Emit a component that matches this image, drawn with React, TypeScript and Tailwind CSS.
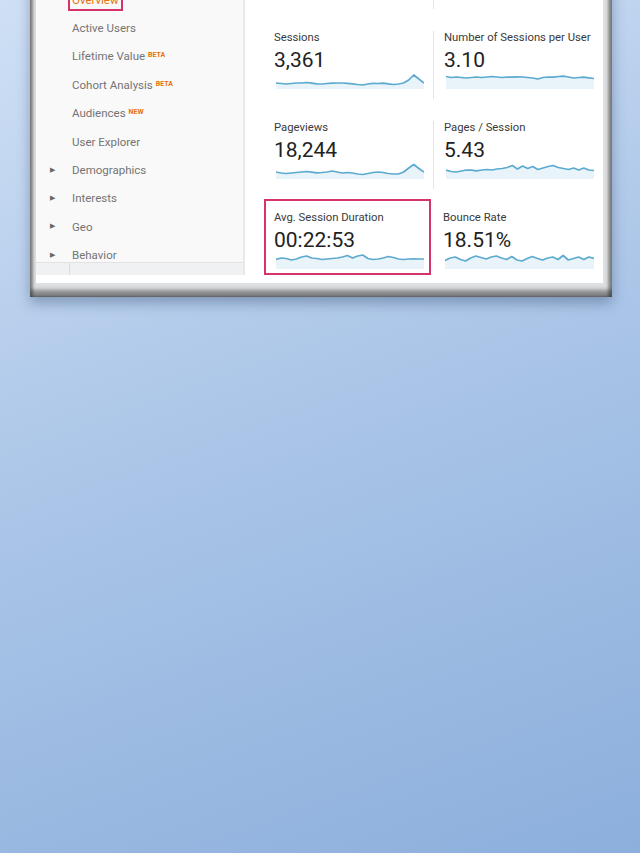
const NAV = [
  { label: "Overview", active: true },
  { label: "Active Users" },
  { label: "Lifetime Value", badge: "BETA" },
  { label: "Cohort Analysis", badge: "BETA" },
  { label: "Audiences", badge: "NEW" },
  { label: "User Explorer" },
  { label: "Demographics", arrow: true },
  { label: "Interests", arrow: true },
  { label: "Geo", arrow: true },
  { label: "Behavior", arrow: true },
];

type M = { label: string; value: string; pts: number[]; marked?: boolean };

const ROWS: M[][] = [
  [
    { label: "Sessions", value: "3,361", pts: [10, 10.5, 11, 10.5, 10, 10, 9.5, 10.2, 10.8, 11, 10.5, 10.2, 10, 10, 10.3, 10.8, 11.5, 12, 11, 10.3, 10.5, 10.2, 10.8, 11.5, 11, 10, 7, 2, 6, 10] },
    { label: "Number of Sessions per User", value: "3.10", pts: [3.5, 4.5, 4, 4.5, 5, 4.5, 4, 4.5, 4, 3.5, 4, 4.5, 4, 4.2, 3.8, 4, 4.5, 5, 6, 4.5, 4, 4.2, 3.5, 3.2, 4, 5, 4.5, 4.2, 4.8, 5.5] },
  ],
  [
    { label: "Pageviews", value: "18,244", pts: [9, 10, 10.5, 10, 9.5, 9, 8.5, 9.2, 9.8, 9.5, 9, 8, 9, 10, 9.5, 10, 11, 11.5, 10.5, 9.5, 9, 9.5, 10.5, 11, 11, 9, 5, 1.5, 5.5, 9] },
    { label: "Pages / Session", value: "5.43", pts: [7, 8.5, 9, 8, 7, 7.2, 7.8, 7, 6.5, 7, 6, 5.5, 4.5, 2.5, 6, 3, 5.5, 3.5, 6.5, 5, 3.5, 2.5, 4.5, 5.5, 6.5, 5, 7, 5, 7, 7.5] },
  ],
  [
    { label: "Avg. Session Duration", value: "00:22:53", pts: [6.5, 5, 5.5, 7, 6, 4, 3, 5, 5.5, 6.5, 6, 5.5, 5, 4, 2.5, 5, 3, 2, 5.5, 6.5, 6, 5, 3.5, 4.5, 6, 6.5, 6, 5.8, 6, 6], marked: true },
    { label: "Bounce Rate", value: "18.51%", pts: [7.5, 5, 4, 6.5, 8, 5, 3, 4.5, 6, 4, 3, 5, 6.5, 3.5, 7, 8, 5.5, 3.5, 5.5, 7, 5, 4, 6.5, 2.5, 7, 5.5, 4, 6.5, 4, 5.5] },
  ],
];

function Spark({ pts }: { pts: number[] }) {
  const step = 100 / (pts.length - 1);
  const line = pts.map((y, i) => `${i === 0 ? "M" : "L"}${(i * step).toFixed(2)},${y}`).join(" ");
  const area = `${line} L100,16 L0,16 Z`;
  return (
    <svg viewBox="0 0 100 16" preserveAspectRatio="none" className="block w-full h-[16px]">
      <path d={area} fill="#e8f3fa" />
      <path d={line} fill="none" stroke="#5caacf" strokeWidth="1.7" vectorEffect="non-scaling-stroke" strokeLinejoin="round" />
    </svg>
  );
}

function Metric({ m, divider }: { m: M; divider?: boolean }) {
  return (
    <div className={`relative pl-[10px] pr-[9px] pb-[10px] ${divider ? "border-l border-[#e4e4e4]" : ""}`}>
      <div className="text-[11.3px] leading-[13px] text-[#3a3a3a] whitespace-nowrap">{m.label}</div>
      <div className="mt-[4px] text-[21px] leading-[24px] text-[#222]">{m.value}</div>
      <div className="mt-[1px] pl-[2px]">
        <Spark pts={m.pts} />
      </div>
      {m.marked && (
        <div className="absolute left-0 top-[-12px] right-[2px] bottom-[4px] border-2 border-[#d6336c] pointer-events-none" />
      )}
    </div>
  );
}

export default function App() {
  return (
    <div className="min-h-[853px] overflow-hidden bg-[linear-gradient(160deg,#cfe0f5_0%,#a9c4e7_50%,#8cafdc_100%)] font-['Roboto','Liberation_Sans',sans-serif]">
      <div className="mt-[-70px] ml-[30px] w-[582px] pl-[6px] pr-[9px] pb-[14px] bg-[#dedfe1] shadow-[inset_3px_0_3px_rgba(0,0,0,0.35),inset_-4px_0_3px_rgba(0,0,0,0.35),inset_0_-7px_4px_rgba(0,0,0,0.4),0_6px_12px_rgba(30,50,90,0.35)]">
        <div className="h-[353px] bg-white flex">
          {/* sidebar */}
          <div className="w-[209px] h-[345px] shrink-0 bg-[#f9f9f9] border-r-2 border-[#e8e8e8] flex flex-col">
            <div className="flex-1 min-h-0 overflow-hidden pt-[55.4px]">
              {NAV.map((n) => (
                <div key={n.label} className="h-[28.4px] flex items-center pl-[14px]">
                  <span className="w-[22px] text-[7px] text-[#666]">{n.arrow ? "▶" : ""}</span>
                  {n.active ? (
                    <span className="ml-[-4px] border-2 border-[#d6336c] px-[2px] py-[2px] text-[11.5px] leading-[14px] text-[#e8710a]">
                      {n.label}
                    </span>
                  ) : (
                    <span className="text-[11.5px] leading-[14px] text-[#747474] whitespace-nowrap">
                      {n.label}
                      {n.badge && (
                        <sup className="ml-[3px] text-[7px] font-bold text-[#e8710a] relative top-[-3px]">{n.badge}</sup>
                      )}
                    </span>
                  )}
                </div>
              ))}
            </div>
            <div className="h-[13px] shrink-0 border-t border-[#e2e2e2] bg-[#f0f1f2]">
              <div className="w-[34px] h-full border-r border-[#dcdcdc]" />
            </div>
          </div>

          {/* metrics */}
          <div className="flex-1 pl-[19px] pt-[11px] grid grid-cols-[169px_1fr] gap-y-[22px] content-start">
            {/* previous row, scrolled out of view */}
            <div className="h-[68px]" />
            <div className="h-[68px] border-l border-[#e4e4e4]" />
            {ROWS.map((row, r) =>
              row.map((m, c) => <Metric key={m.label} m={m} divider={c === 1 && r < 2} />)
            )}
          </div>
        </div>
      </div>
    </div>
  );
}
